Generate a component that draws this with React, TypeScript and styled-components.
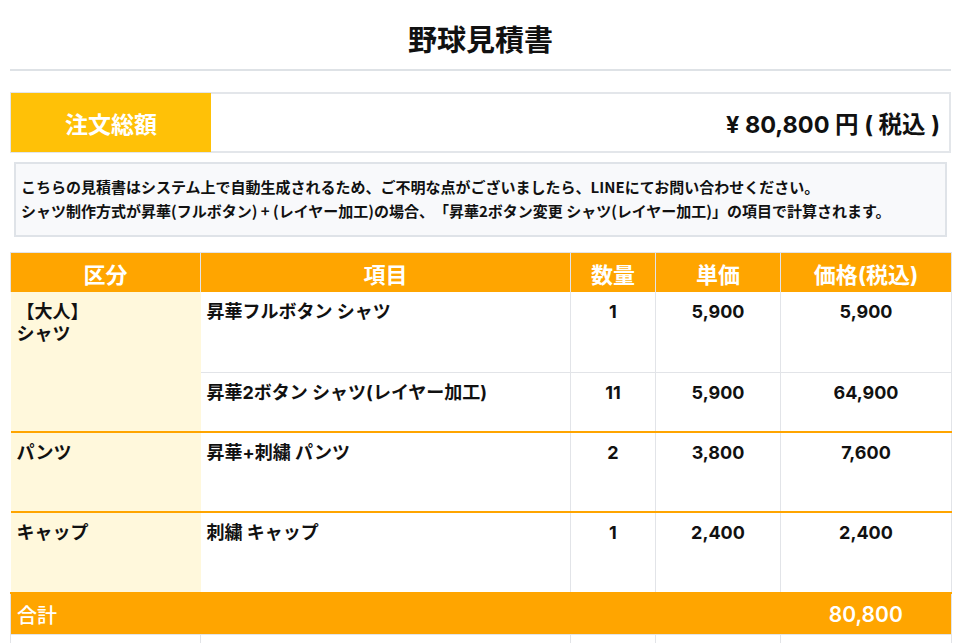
import React from 'react';
import styled, { createGlobalStyle } from 'styled-components';

const GlobalStyle = createGlobalStyle`
  html, body { margin: 0; padding: 0; background: #fff; }
  body {
    font-family: Inter, "Noto Sans CJK JP", sans-serif;
    color: #111;
    text-spacing-trim: space-all;
  }
`;

const Page = styled.div`
  padding: 0 10px;
`;

const Title = styled.h1`
  margin: 18px 0 0;
  padding-bottom: 11px;
  border-bottom: 2px solid #dee2e6;
  font-family: "Noto Sans CJK JP", sans-serif;
  font-size: 29px;
  line-height: 40px;
  font-weight: 700;
  text-align: center;
  color: #111;
`;

const TotalBox = styled.div`
  margin-top: 21px;
  height: 61px;
  box-sizing: border-box;
  display: flex;
  border: 2px solid #e3e6ea;
`;

const TotalLabel = styled.div`
  width: 200px;
  margin: -1px 0 -1px -1px;
  background: #ffc107;
  color: #fff;
  display: flex;
  align-items: center;
  justify-content: center;
  font-family: "Noto Sans CJK JP", sans-serif;
  font-size: 23px;
  font-weight: 700;
`;

const TotalAmount = styled.div`
  flex: 1;
  display: flex;
  align-items: center;
  justify-content: flex-end;
  padding-right: 9px;
  font-size: 23.5px;
  font-weight: 700;
  color: #111;
`;

const Notice = styled.div`
  margin: 9px 4px 0;
  border: 2px solid #dfe3e8;
  background: #f8f9fb;
  padding: 11px 5px 12px;
  font-family: "Noto Sans CJK JP", sans-serif;
  font-size: 15px;
  line-height: 24px;
  font-weight: 700;
  color: #111;
`;

const Table = styled.table`
  margin-top: 15px;
  width: 100%;
  border-collapse: collapse;
  table-layout: fixed;
`;

const HeadCell = styled.th`
  height: 39px;
  padding: 0;
  background: #ffa500;
  color: #fff;
  font-family: Inter, "Noto Sans CJK JP", sans-serif;
  font-size: 22px;
  font-weight: 700;
  text-align: center;
  border: 1px solid #e2e4e8;
  border-bottom: none;
`;

const BodyRow = styled.tr<{ $end?: boolean }>`
  border-bottom: ${p => (p.$end ? '2px solid #ffa500' : '1px solid #e2e4e8')};
`;

const Cell = styled.td<{ $center?: boolean; $cat?: boolean; $h: number }>`
  height: ${p => p.$h}px;
  box-sizing: border-box;
  padding: 9px 6px 0;
  vertical-align: top;
  font-size: 18px;
  line-height: 22px;
  font-weight: 700;
  color: #111;
  text-align: ${p => (p.$center ? 'center' : 'left')};
  background: ${p => (p.$cat ? '#fff8dc' : '#fff')};
  border-left: ${p => (p.$cat ? 'none' : '1px solid #e2e4e8')};
  border-right: 1px solid #e2e4e8;
  ${p => (p.$cat ? 'border-right: none;' : '')}
`;

const ItemCell = styled(Cell)`
  border-left: none;
`;

const SumRow = styled.tr`
  background: #ffa500;
`;

const SumLabel = styled.td`
  height: 40px;
  padding: 0 6px;
  color: #fff;
  font-family: "Noto Sans CJK JP", sans-serif;
  font-size: 20px;
  font-weight: 500;
  border: 1px solid #e2e4e8;
  border-right: none;
`;

const SumValue = styled.td`
  padding: 0;
  text-align: center;
  color: #fff;
  font-size: 21px;
  font-weight: 600;
  border: 1px solid #e2e4e8;
  border-left: none;
`;

const EmptyCell = styled.td`
  height: 40px;
  border: 1px solid #e2e4e8;
`;

type Item = { name: string; qty: string; unit: string; price: string };
type Group = { cat: React.ReactNode; items: Item[]; heights: number[] };

const groups: Group[] = [
  {
    cat: (
      <>
        【大人】
        <br />
        シャツ
      </>
    ),
    items: [
      { name: '昇華フルボタン シャツ', qty: '1', unit: '5,900', price: '5,900' },
      { name: '昇華2ボタン シャツ(レイヤー加工)', qty: '11', unit: '5,900', price: '64,900' },
    ],
    heights: [80, 60],
  },
  {
    cat: 'パンツ',
    items: [{ name: '昇華+刺繍 パンツ', qty: '2', unit: '3,800', price: '7,600' }],
    heights: [80],
  },
  {
    cat: 'キャップ',
    items: [{ name: '刺繍 キャップ', qty: '1', unit: '2,400', price: '2,400' }],
    heights: [81],
  },
];

export default function App() {
  return (
    <>
      <GlobalStyle />
      <Page>
        <Title>野球見積書</Title>
        <TotalBox>
          <TotalLabel>注文総額</TotalLabel>
          <TotalAmount>¥ 80,800 円 ( 税込 )</TotalAmount>
        </TotalBox>
        <Notice>
          こちらの見積書はシステム上で自動生成されるため、ご不明な点がございましたら、LINEにてお問い合わせください。
          <br />
          シャツ制作方式が昇華(フルボタン) + (レイヤー加工)の場合、「昇華2ボタン変更 シャツ(レイヤー加工)」の項目で計算されます。
        </Notice>
        <Table>
          <colgroup>
            <col style={{ width: 190 }} />
            <col style={{ width: 370 }} />
            <col style={{ width: 85 }} />
            <col style={{ width: 125 }} />
            <col style={{ width: 171 }} />
          </colgroup>
          <thead>
            <tr>
              <HeadCell>区分</HeadCell>
              <HeadCell>項目</HeadCell>
              <HeadCell>数量</HeadCell>
              <HeadCell>単価</HeadCell>
              <HeadCell>価格(税込)</HeadCell>
            </tr>
          </thead>
          <tbody>
            {groups.map((g, gi) =>
              g.items.map((it, ii) => (
                <BodyRow key={`${gi}-${ii}`} $end={ii === g.items.length - 1}>
                  {ii === 0 && (
                    <Cell $cat $h={g.heights[0]} rowSpan={g.items.length}>
                      {g.cat}
                    </Cell>
                  )}
                  <ItemCell $h={g.heights[ii]}>{it.name}</ItemCell>
                  <Cell $center $h={g.heights[ii]}>{it.qty}</Cell>
                  <Cell $center $h={g.heights[ii]}>{it.unit}</Cell>
                  <Cell $center $h={g.heights[ii]}>{it.price}</Cell>
                </BodyRow>
              ))
            )}
            <SumRow>
              <SumLabel colSpan={4}>合計</SumLabel>
              <SumValue>80,800</SumValue>
            </SumRow>
            <tr>
              <EmptyCell />
              <EmptyCell />
              <EmptyCell />
              <EmptyCell />
              <EmptyCell />
            </tr>
          </tbody>
        </Table>
      </Page>
    </>
  );
}
